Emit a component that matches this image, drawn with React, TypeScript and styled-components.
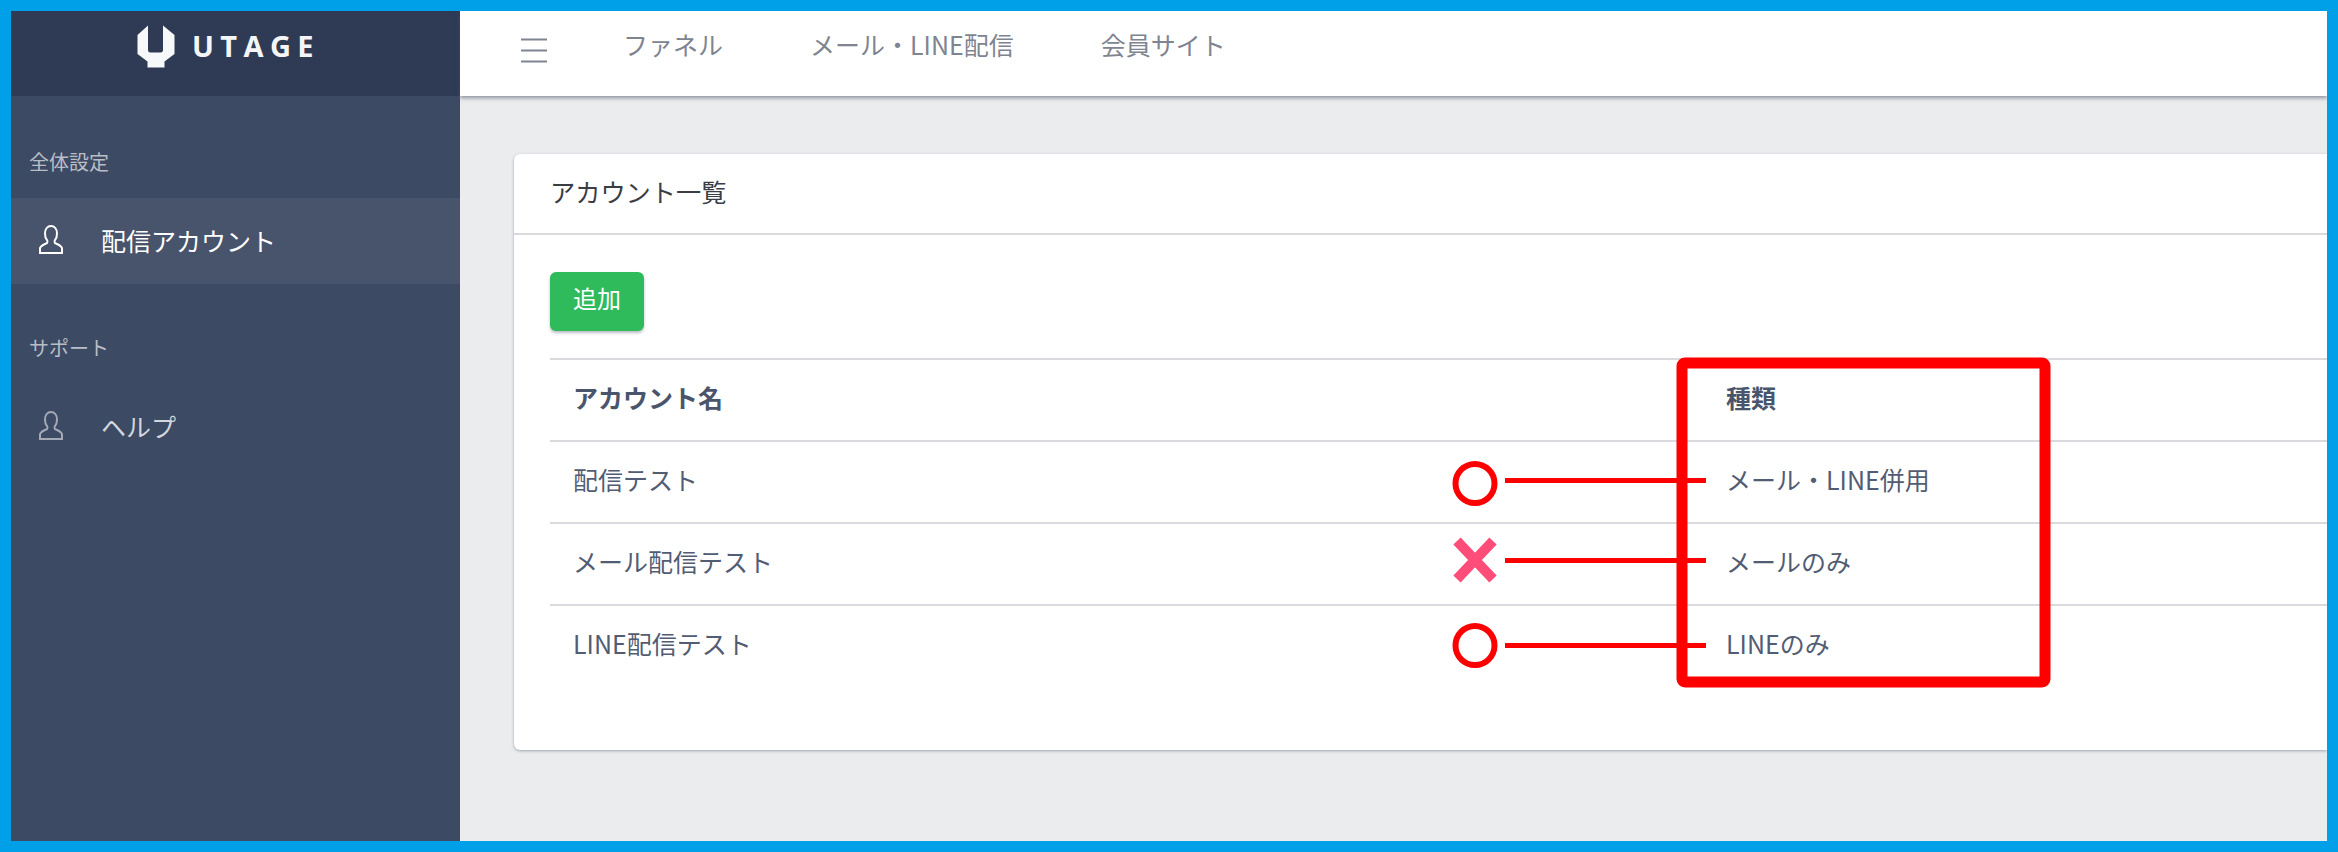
import React from "react";
import styled, { createGlobalStyle } from "styled-components";

const Global = createGlobalStyle`
  html, body { margin: 0; padding: 0; background: #00a0e9; }
  body { font-family: "Noto Sans CJK JP", "Noto Sans", sans-serif; }
  * { box-sizing: border-box; }
`;

const Frame = styled.div`
  position: relative;
  width: 2338px;
  height: 852px;
  border: 11px solid #00a0e9;
  display: flex;
  overflow: hidden;
  background: #ebecee;
`;

const Sidebar = styled.aside`
  width: 449px;
  flex: none;
  background: #3d4a63;
  display: flex;
  flex-direction: column;
`;

const Brand = styled.div`
  height: 85px;
  background: #2f3b54;
  display: flex;
  align-items: flex-start;
  padding: 14px 0 0 126px;
  gap: 17px;
`;

const BrandName = styled.span`
  font-family: "Open Sans", sans-serif;
  font-weight: 700;
  font-size: 29px;
  line-height: 42px;
  letter-spacing: 6.4px;
  color: #f4f5f6;
`;

const SectionLabel = styled.div<{ $top: number }>`
  margin-top: ${(p) => p.$top}px;
  padding-left: 18px;
  height: 30px;
  font-size: 20px;
  line-height: 30px;
  color: #b9bdc7;
`;

const NavItem = styled.div<{ $active?: boolean; $top: number }>`
  height: 86px;
  margin-top: ${(p) => p.$top}px;
  display: flex;
  align-items: center;
  padding: 0 0 3px 28px;
  gap: 38px;
  background: ${(p) => (p.$active ? "#48546b" : "transparent")};
  color: ${(p) => (p.$active ? "#ffffff" : "#d3d6dc")};
  font-size: 25px;
  svg { color: ${(p) => (p.$active ? "#ffffff" : "#a3a9b5")}; flex: none; }
`;

const Main = styled.div`
  flex: 1;
  min-width: 0;
  display: flex;
  flex-direction: column;
`;

const Topbar = styled.header`
  height: 85px;
  flex: none;
  background: #fff;
  box-shadow: 0 2px 4px rgba(70, 82, 105, 0.6);
  display: flex;
  align-items: flex-start;
  padding: 27px 0 0 61px;
  position: relative;
`;

const Hamburger = styled.svg`
  width: 26px;
  height: 25px;
  flex: none;
  margin-right: 76px;
`;

const TopLink = styled.span`
  font-size: 25px;
  line-height: 36px;
  margin-top: -12px;
  color: #7f8491;
  margin-right: 87px;
  white-space: nowrap;
`;

const Content = styled.main`
  flex: 1;
  padding: 58px 0 0 54px;
`;

const Card = styled.section`
  height: 596px;
  background: #fff;
  border-radius: 6px 0 0 6px;
  box-shadow: 0 1px 3px rgba(80, 92, 115, 0.5);
`;

const CardHead = styled.div`
  height: 81px;
  border-bottom: 2px solid #d9dade;
  padding: 0 0 6px 36px;
  display: flex;
  align-items: center;
  font-size: 25.2px;
  color: #3a3d44;
`;

const CardBody = styled.div`
  padding: 37px 0 0 36px;
`;

const AddButton = styled.button`
  display: block;
  width: 94px;
  height: 59px;
  border: 0;
  border-radius: 6px;
  background: #2fba5c;
  box-shadow: 0 2px 3px rgba(60, 70, 90, 0.35);
  color: #fff;
  font: inherit;
  font-size: 24px;
  padding: 0 0 8px;
  margin-bottom: 27px;
`;

const Row = styled.div`
  height: 82px;
  display: grid;
  grid-template-columns: 1153px 1fr;
  align-items: center;
  border-top: 2px solid #d9dade;
  color: #525d74;
  font-size: 25px;
`;

const HeadRow = styled(Row)`
  font-weight: 700;
  font-size: 25px;
  color: #4a556c;
`;

const Cell = styled.div`
  padding-left: 23px;
  margin-top: -6px;
  white-space: nowrap;
`;

const Annotations = styled.svg`
  position: absolute;
  left: -11px;
  top: -11px;
  width: 2338px;
  height: 852px;
  pointer-events: none;
`;

const PersonIcon = () => (
  <svg width="24" height="29" viewBox="0 0 24 29" fill="none" stroke="currentColor" strokeWidth="2">
    <path d="M1 28v-4.5c0-3 5-4.2 7.2-5.6 .6-.9 .5-2-.3-3C6.6 13.4 6 11.200 6 8.500 6 4 8.500 1 12 1s6 3 6 7.500c0 2.700-.6 4.900-1.900 6.400-.8 1-.9 2.100-.3 3C18 19.300 23 20.500 23 23.500V28Z" />
  </svg>
);

const Logo = () => (
  <svg width="38" height="43" viewBox="0 0 38 43" fill="#f7f8f9">
    <path d="M11 0.500V25c0 1.500 .8 2.500 2.300 2.500h10.400c1.500 0 2.300-1 2.300-2.500V0.500L37.500 10V29l-10 7.500V42.500H10.500V36.500L.5 29V10Z" />
  </svg>
);

const rows = [
  ["配信テスト", "メール・LINE併用"],
  ["メール配信テスト", "メールのみ"],
  ["LINE配信テスト", "LINEのみ"],
];

export default function App() {
  return (
    <>
      <Global />
      <Frame>
        <Sidebar>
          <Brand>
            <Logo />
            <BrandName>UTAGE</BrandName>
          </Brand>
          <SectionLabel $top={51}>全体設定</SectionLabel>
          <NavItem $active $top={21}>
            <PersonIcon />
            <span>配信アカウント</span>
          </NavItem>
          <SectionLabel $top={49}>サポート</SectionLabel>
          <NavItem $top={21}>
            <PersonIcon />
            <span>ヘルプ</span>
          </NavItem>
        </Sidebar>
        <Main>
          <Topbar>
            <Hamburger viewBox="0 0 26 25" stroke="#7f8491" strokeWidth="2.2">
              <path d="M0 1.500h26M0 12.500h26M0 23.500h26" />
            </Hamburger>
            <TopLink>ファネル</TopLink>
            <TopLink>メール・LINE配信</TopLink>
            <TopLink>会員サイト</TopLink>
          </Topbar>
          <Content>
            <Card>
              <CardHead>アカウント一覧</CardHead>
              <CardBody>
                <AddButton>追加</AddButton>
                <HeadRow>
                  <Cell>アカウント名</Cell>
                  <Cell>種類</Cell>
                </HeadRow>
                {rows.map(([name, kind]) => (
                  <Row key={name}>
                    <Cell>{name}</Cell>
                    <Cell>{kind}</Cell>
                  </Row>
                ))}
              </CardBody>
            </Card>
          </Content>
        </Main>
        <Annotations viewBox="0 0 2338 852" fill="none">
          <rect x="1682" y="363" width="363" height="319" rx="3" stroke="#ff0000" strokeWidth="11" />
          <circle cx="1475" cy="483.500" r="19.500" stroke="#ff0000" strokeWidth="6" />
          <circle cx="1475" cy="645.500" r="19.500" stroke="#ff0000" strokeWidth="6" />
          <path d="M1457 541l36 38M1493 541l-36 38" stroke="#ff4d79" strokeWidth="10" />
          <path d="M1505 480.500h201M1505 560.500h201M1505 645.500h201" stroke="#ff0000" strokeWidth="5" />
        </Annotations>
      </Frame>
    </>
  );
}
